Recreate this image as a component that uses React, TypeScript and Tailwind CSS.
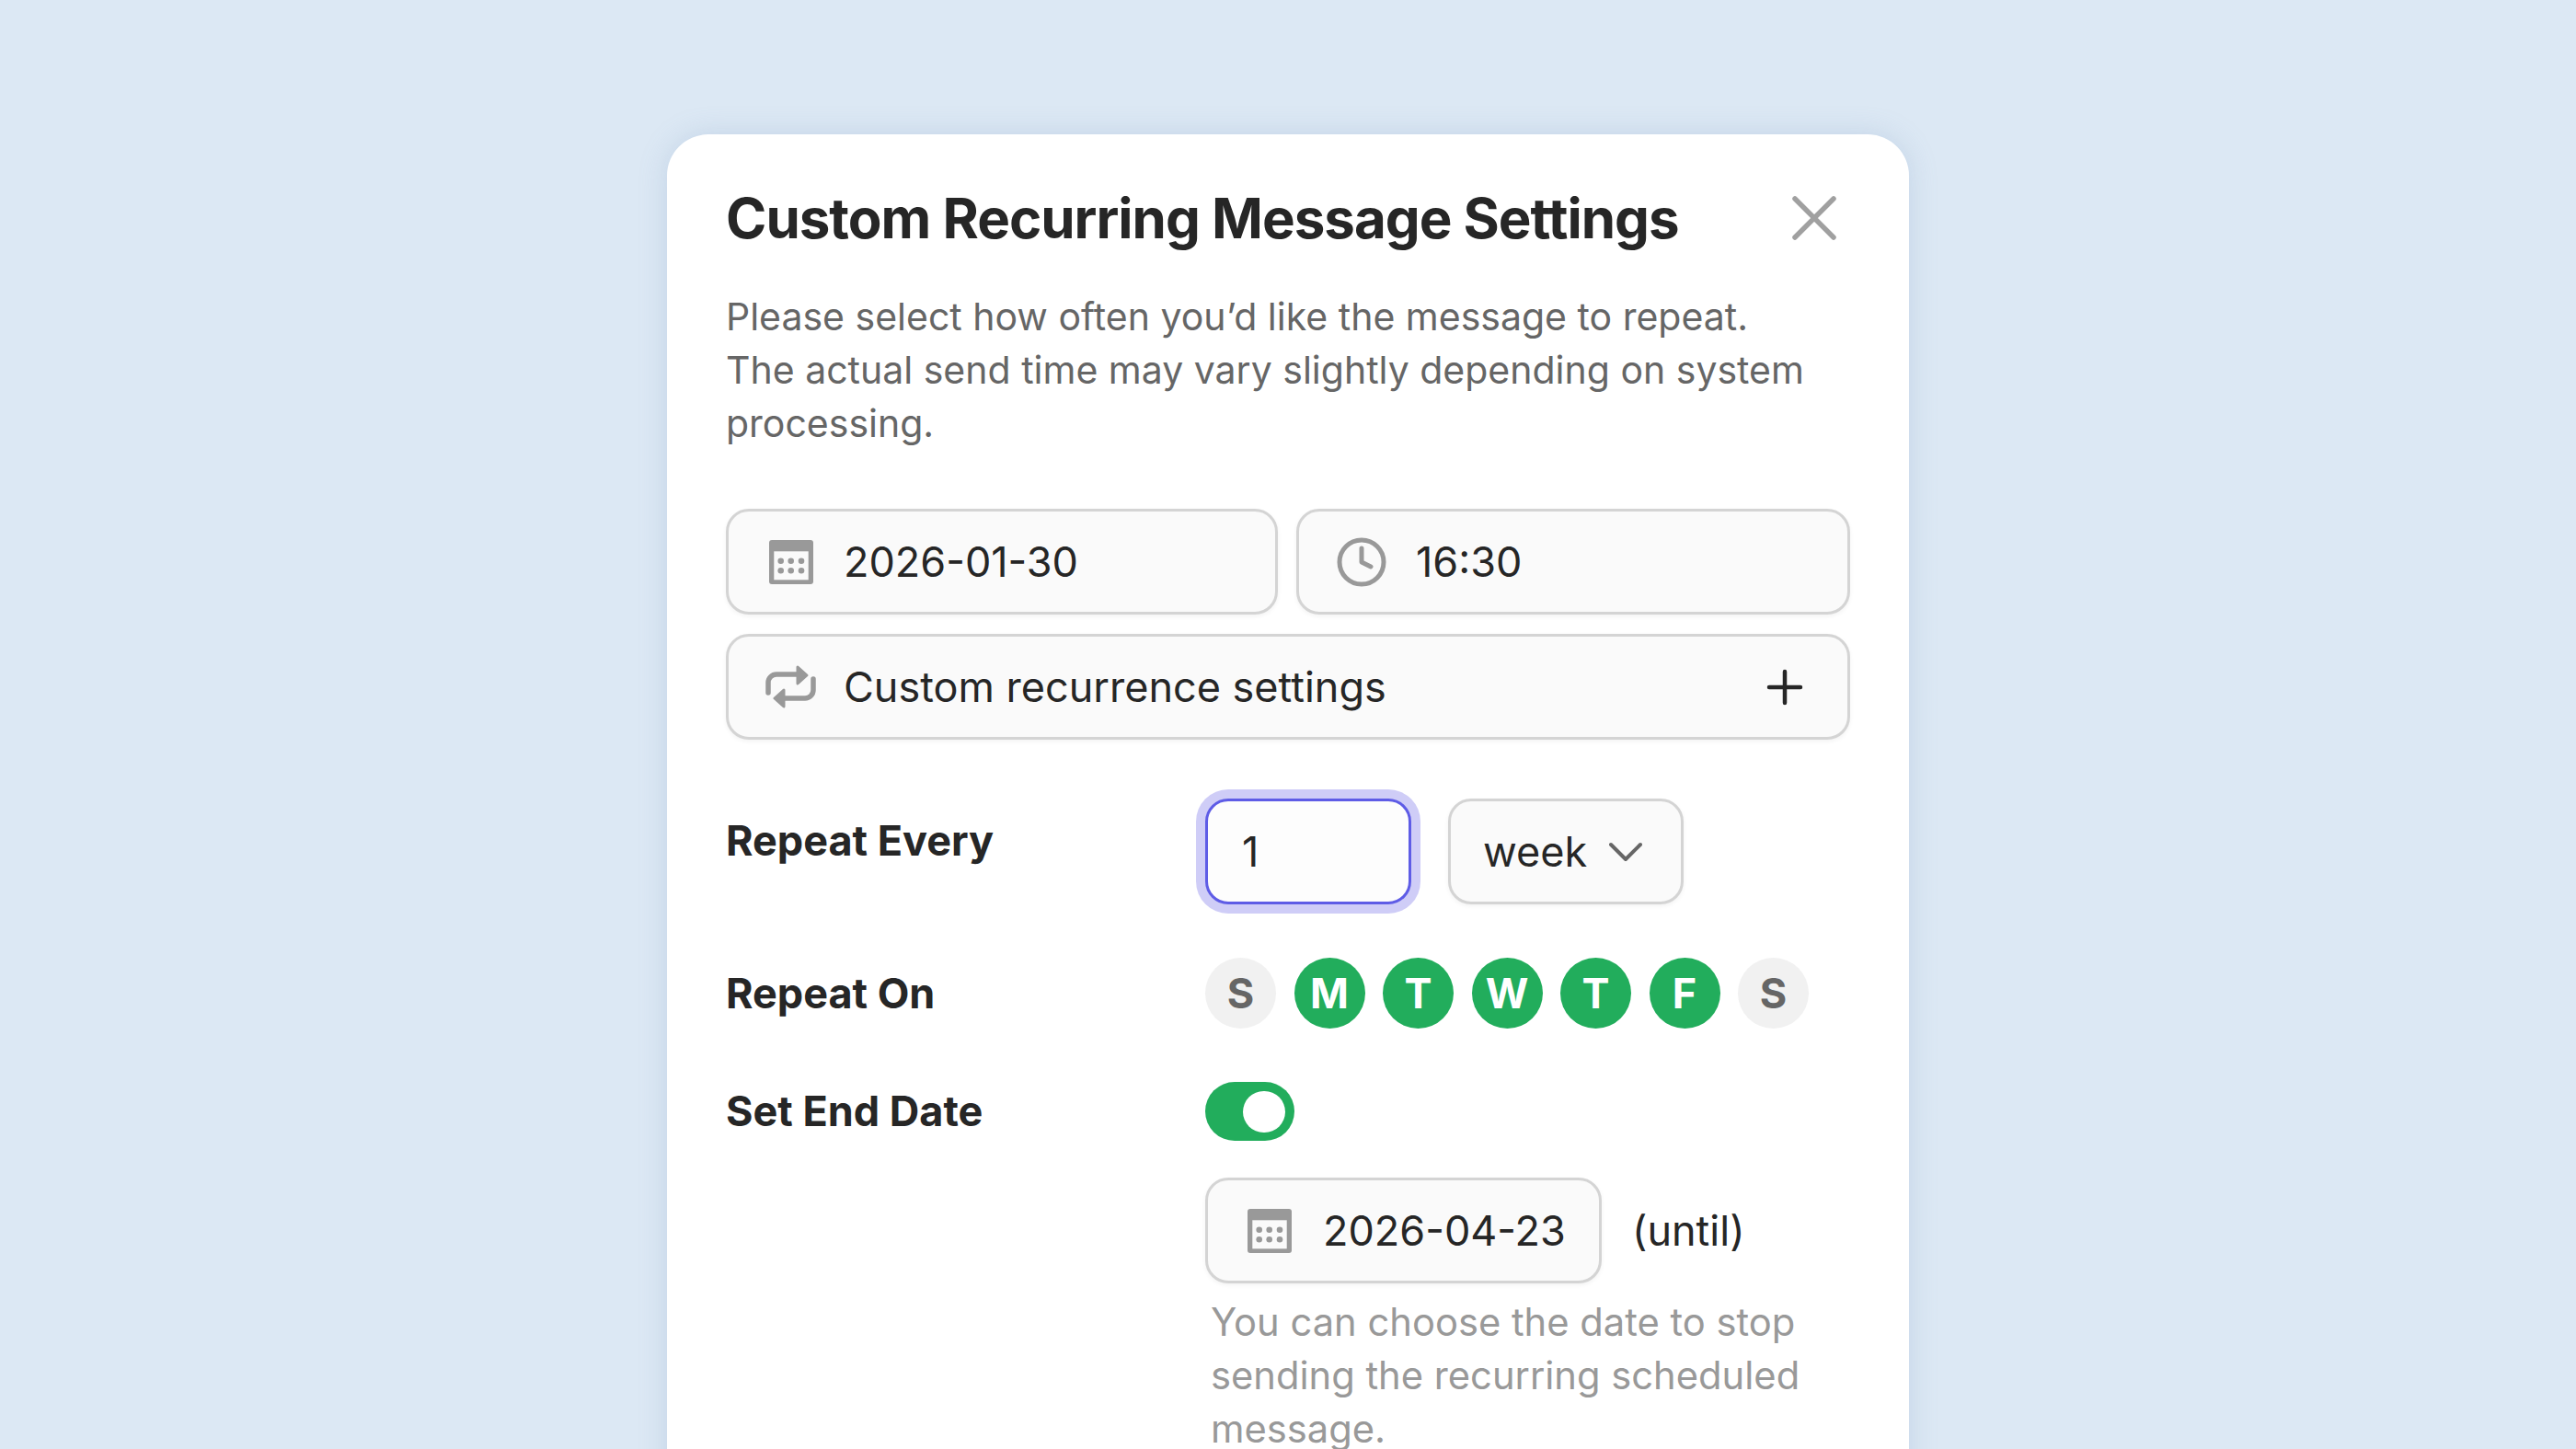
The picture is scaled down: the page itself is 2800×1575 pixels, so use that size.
const Calendar = () => (
  <svg width="48" height="48" viewBox="0 0 48 48" className="shrink-0">
    <rect width="48" height="48" rx="3" fill="#999999" />
    <rect x="5.3" y="12.3" width="37.4" height="31" fill="#fafafa" />
    {[12.7, 23.7, 35].map((x) =>
      [22.7, 33.3].map((y) => <circle key={`${x}-${y}`} cx={x} cy={y} r="3.3" fill="#999999" />)
    )}
  </svg>
);

const Clock = () => (
  <svg width="54" height="54" viewBox="0 0 54 54" fill="none" stroke="#999999" strokeWidth="5" strokeLinecap="round" strokeLinejoin="round" className="shrink-0">
    <circle cx="27" cy="27" r="24" />
    <path d="M27 12v15l10 5" />
  </svg>
);

const RepeatIcon = () => (
  <svg width="55" height="48" viewBox="0 0 55 48" fill="none" className="shrink-0">
    <path d="M3 30v-11a9 9 0 0 1 9-9h24" stroke="#999999" strokeWidth="5.5" strokeLinecap="round" />
    <path d="M52 15v12a9 9 0 0 1-9 9H19" stroke="#999999" strokeWidth="5.5" strokeLinecap="round" />
    <path d="M35 2l10 9-10 9z" fill="#999999" stroke="#999999" strokeWidth="3" strokeLinejoin="round" />
    <path d="M20 27L10 36l10 9z" fill="#999999" stroke="#999999" strokeWidth="3" strokeLinejoin="round" />
  </svg>
);

const days = [
  { label: "S", on: false },
  { label: "M", on: true },
  { label: "T", on: true },
  { label: "W", on: true },
  { label: "T", on: true },
  { label: "F", on: true },
  { label: "S", on: false },
];

export default function App() {
  return (
    <div className="h-[1575px] overflow-hidden bg-[#dce8f4] pt-[146px] font-['Inter',sans-serif]">
      <div className="mx-auto w-[1350px] rounded-[45px] bg-white px-[64px] pt-[52px] pb-[60px] shadow-[0_0_30px_rgba(120,150,190,0.25)]">
        <div className="flex items-center justify-between">
          <h2 className="text-[60px] leading-[78px] font-bold tracking-[-1px] text-[#262626]">
            Custom Recurring Message Settings
          </h2>
          <button className="mr-[15px]">
            <svg width="48" height="48" viewBox="0 0 48 48" fill="none" stroke="#a0a0a0" strokeWidth="5.5" strokeLinecap="round" className="block">
              <path d="M3 3l42 42M45 3L3 45" />
            </svg>
          </button>
        </div>

        <p className="mt-[39px] text-[41px] leading-[58px] text-[#666666]">
          Please select how often you’d like the message to repeat.
          <br />
          The actual send time may vary slightly depending on system processing.
        </p>

        <div className="mt-[64px] flex flex-col gap-[21px]">
          <div className="flex gap-[20px]">
            <div className="flex h-[115px] w-[600px] shrink-0 items-center gap-[33px] rounded-[25px] border-[3px] border-[#d4d4d4] bg-[#fafafa] pl-[44px] text-[45px] text-[#262626] shadow-[0_2px_5px_rgba(0,0,0,0.05)]">
              <Calendar />
              <span>2026-01-30</span>
            </div>
            <div className="flex h-[115px] flex-1 items-center gap-[32px] rounded-[25px] border-[3px] border-[#d4d4d4] bg-[#fafafa] pl-[41px] text-[45px] text-[#262626] shadow-[0_2px_5px_rgba(0,0,0,0.05)]">
              <Clock />
              <span>16:30</span>
            </div>
          </div>
          <div className="flex h-[115px] items-center gap-[30px] rounded-[25px] border-[3px] border-[#d4d4d4] bg-[#fafafa] pr-[47px] pl-[40px] text-[45px] text-[#262626] shadow-[0_2px_5px_rgba(0,0,0,0.05)]">
            <RepeatIcon />
            <span className="flex-1">Custom recurrence settings</span>
            <svg width="42" height="42" viewBox="0 0 42 42" fill="none" stroke="#262626" strokeWidth="4.5" strokeLinecap="round" className="shrink-0">
              <path d="M21 4v34M4 21h34" />
            </svg>
          </div>
        </div>

        <div className="mt-[64px] grid grid-cols-[521px_1fr] items-start text-[45px]">
          <div className="pt-[17px] leading-[58px] font-bold text-[#262626]">Repeat Every</div>
          <div className="flex gap-[40px]">
            <div className="flex h-[115px] w-[224px] items-center rounded-[25px] border-[3px] border-[#5e5ce6] bg-[#fdfdfd] pl-[37px] text-[#262626] shadow-[0_0_0_10px_#cfcdf7]">
              1
            </div>
            <div className="flex h-[115px] w-[256px] items-center gap-[24px] rounded-[25px] border-[3px] border-[#d4d4d4] bg-[#fafafa] pl-[35px] text-[#262626] shadow-[0_2px_5px_rgba(0,0,0,0.05)]">
              <span>week</span>
              <svg width="36" height="22" viewBox="0 0 36 22" fill="none" stroke="#666666" strokeWidth="4" strokeLinecap="round" strokeLinejoin="round">
                <path d="M2 3l16 16L34 3" />
              </svg>
            </div>
          </div>

          <div className="mt-[58px] flex h-[77px] items-center font-bold text-[#262626]">Repeat On</div>
          <div className="mt-[58px] flex gap-[19.5px]">
            {days.map((d, i) => (
              <div
                key={i}
                className={`flex h-[77px] w-[77px] items-center justify-center rounded-full font-bold ${
                  d.on ? "bg-[#22ad5c] text-white" : "bg-[#f1f1f1] text-[#666666]"
                }`}
              >
                {d.label}
              </div>
            ))}
          </div>

          <div className="mt-[58px] flex h-[64px] items-center font-bold text-[#262626]">Set End Date</div>
          <div className="mt-[58px]">
            <div className="flex h-[64px] w-[97px] items-center justify-end rounded-full bg-[#22ad5c] pr-[10px]">
              <div className="h-[45px] w-[46px] rounded-full bg-white" />
            </div>

            <div className="mt-[40px] flex items-center gap-[33px]">
              <div className="flex h-[115px] w-[431px] items-center gap-[34px] rounded-[25px] border-[3px] border-[#d4d4d4] bg-[#fafafa] pl-[43px] text-[#262626] shadow-[0_2px_5px_rgba(0,0,0,0.05)]">
                <Calendar />
                <span>2026-04-23</span>
              </div>
              <span className="text-[#262626]">(until)</span>
            </div>

            <p className="mt-[13px] pl-[6px] text-[41.7px] leading-[58px] text-[#999999]">
              You can choose the date to stop sending the recurring scheduled message.
            </p>
          </div>
        </div>
      </div>
    </div>
  );
}
